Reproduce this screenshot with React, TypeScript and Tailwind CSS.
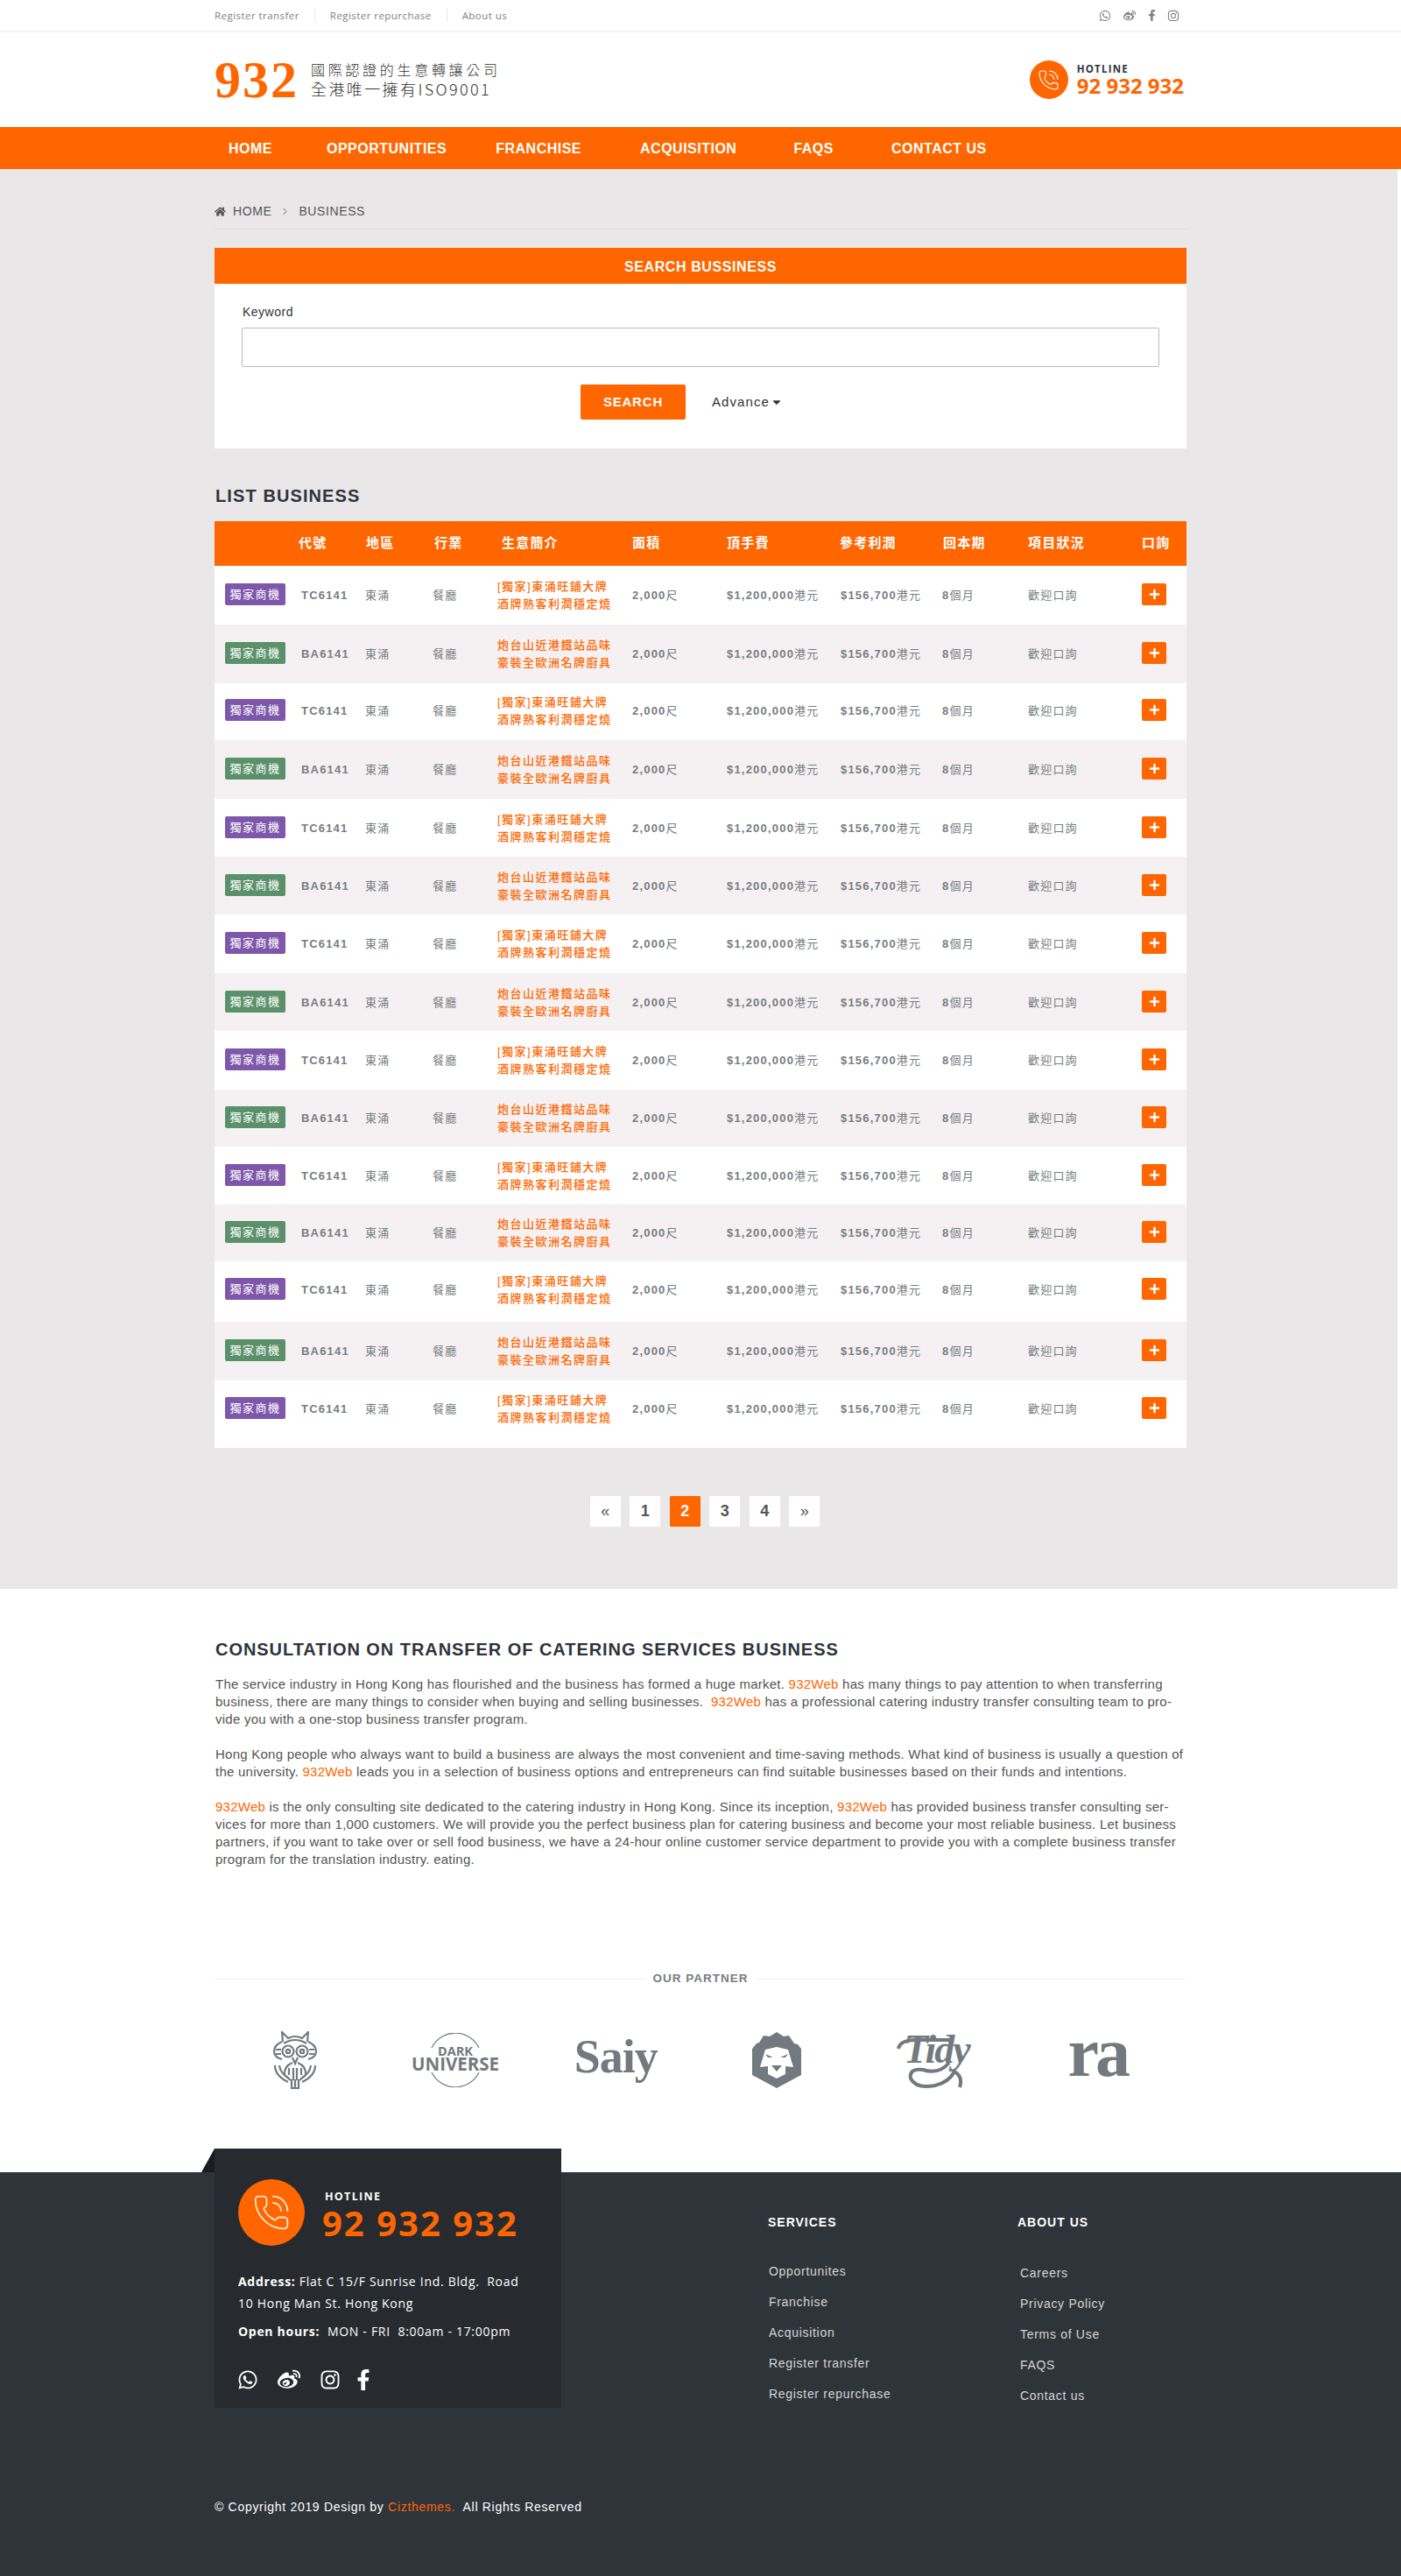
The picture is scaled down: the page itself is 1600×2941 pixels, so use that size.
import { FaWhatsapp, FaWeibo, FaFacebookF, FaInstagram, FaPlus, FaHome, FaCaretDown } from 'react-icons/fa'
import { PhoneCall, ChevronRight } from 'lucide-react'

const navItems = [
    { label: 'HOME', cls: 'ml-[16px]' },
    { label: 'OPPORTUNITIES', cls: 'ml-[62px]' },
    { label: 'FRANCHISE', cls: 'ml-[56px]' },
    { label: 'ACQUISITION', cls: 'ml-[67px]' },
    { label: 'FAQS', cls: 'ml-[65px]' },
    { label: 'CONTACT US', cls: 'ml-[66px]' },
]

const tableCols = 'grid grid-cols-[99px_73px_77px_74px_154px_108px_130px_116px_98px_130px_51px]'

const headers = [
    { label: '', cls: '' },
    { label: '代號', cls: '-ml-[3px]' },
    { label: '地區', cls: 'ml-[1px]' },
    { label: '行業', cls: 'ml-[2px]' },
    { label: '生意簡介', cls: 'ml-[5px]' },
    { label: '面積', cls: '' },
    { label: '頂手費', cls: '' },
    { label: '參考利潤', cls: '-ml-[1px]' },
    { label: '回本期', cls: 'ml-[1px]' },
    { label: '項目狀況', cls: '' },
    { label: '口詢', cls: '' },
]

const rowSizes = [
    'h-[67px] pt-[14px]', 'h-[67px] pt-[14px]', 'h-[65px] pt-[12px]', 'h-[67px] pt-[14px]', 'h-[66px] pt-[14px]',
    'h-[66px] pt-[14px]', 'h-[67px] pt-[14px]', 'h-[66px] pt-[14px]', 'h-[67px] pt-[14px]', 'h-[65px] pt-[13px]',
    'h-[66px] pt-[14px]', 'h-[65px] pt-[13px]', 'h-[69px] pt-[13px]', 'h-[67px] pt-[14px]', 'h-[77px] pt-[13px]',
]

const serviceLinks = ['Opportunites', 'Franchise', 'Acquisition', 'Register transfer', 'Register repurchase']
const aboutLinks = ['Careers', 'Privacy Policy', 'Terms of Use', 'FAQS', 'Contact us']

const Brand = () => <span className="text-[#ff6600]">932Web</span>

const OwlLogo = () => (
    <svg width="50" height="66" viewBox="0 0 50 66" fill="none" stroke="#737a7f" strokeWidth="2.2">
        <path d="M11 12 L10 1 L17 8 Q25 4 33 8 L40 1 L39 12" />
        <path d="M10 12 Q1 16 1 23 Q1 30 10 32 M40 12 Q49 16 49 23 Q49 30 40 32" />
        <path d="M12 14 Q25 6 38 14" />
        <circle cx="17" cy="23" r="6.5" />
        <circle cx="33" cy="23" r="6.5" />
        <circle cx="17" cy="23" r="2.2" />
        <circle cx="33" cy="23" r="2.2" />
        <path d="M3 21 H9 M3 26 H9 M41 21 H47 M41 26 H47" />
        <path d="M22 30 L25 37 L28 30" />
        <path d="M2 39 Q2 51 17 58 M48 39 Q48 51 33 58" />
        <path d="M7 39 Q8 48 18 54 M43 39 Q42 48 32 54" />
        <path d="M22 36 Q12 40 13 50 L20 56 M28 36 Q38 40 37 50 L30 56" />
        <path d="M18 42 V50 M23 42 V56 M27 42 V56 M32 42 V50" />
        <path d="M21 55 V65 H29 V55 M25 55 V65" />
    </svg>
)

const DarkUniverseLogo = () => (
    <svg width="98" height="62" viewBox="0 0 98 62" fill="none">
        <path d="M22 17 A30 30 0 0 1 76 17" stroke="#737a7f" strokeWidth="1.2" />
        <path d="M22 45 A30 30 0 0 0 76 45" stroke="#737a7f" strokeWidth="1.2" />
        <text x="49" y="26" textAnchor="middle" fontFamily="'Open Sans', sans-serif" fontWeight="700" fontSize="14.5" fill="#737a7f">DARK</text>
        <text x="49" y="43" textAnchor="middle" fontFamily="'Open Sans', sans-serif" fontWeight="700" fontSize="20.5" fill="#737a7f">UNIVERSE</text>
    </svg>
)

const LionLogo = () => (
    <svg width="56" height="64" viewBox="0 0 56 64">
        <path d="M28 0 L36 5 L42 4 L48 13 L52 14 L56 19 V49 L28 64 L0 49 V19 L5 13 L8 12 L13 4 L20 5 Z" fill="#737a7f" />
        <path d="M15 20 L28 17 L41 20 L47 40 L38 39 V48 L28 53 L18 48 V39 L9 40 Z" fill="#fff" />
        <path d="M15 25 L24 29 L18 29 Z M41 25 L32 29 L38 29 Z M22 38 H34 L28 45 Z" fill="#737a7f" />
    </svg>
)

// the swoosh is drawn, the word itself stays real text
const TidyLogo = () => (
    <div className="relative w-[92px] h-[66px]">
        <span className="absolute left-[8px] top-[-7px] font-['Liberation_Serif',serif] italic font-bold text-[46px] leading-[56px] tracking-[-2px] text-[#737a7f]">Tidy</span>
        <svg className="absolute left-0 top-0" width="92" height="66" viewBox="0 0 92 66" fill="none" stroke="#737a7f" strokeWidth="4">
            <path d="M2 20 Q4 10 22 10 L60 10" />
            <path d="M60 36 Q48 50 30 44 Q14 42 16 54 Q22 66 44 62 Q60 58 66 46 Q76 52 72 64" />
        </svg>
    </div>
)

const App = () => {
    return (
        <div className="w-[1600px] bg-white font-['Liberation_Sans','Noto_Sans_CJK_TC',sans-serif] text-[#555]">
            {/* top bar */}
            <div className="h-[37px] border-b-2 border-[#f5f5f5]">
                <div className="w-[1110px] mx-auto h-full flex items-center justify-between font-['Open_Sans',sans-serif] text-[11.5px] tracking-[0.45px] text-[#7d8185]">
                    <div className="flex items-center">
                        <span>Register transfer</span>
                        <span className="w-px h-[15px] bg-[#e8e8e8] mx-[17px]"></span>
                        <span>Register repurchase</span>
                        <span className="w-px h-[15px] bg-[#e8e8e8] mx-[17px]"></span>
                        <span>About us</span>
                    </div>
                    <div className="flex items-center pr-[8px] text-[14px]">
                        <FaWhatsapp />
                        <FaWeibo className="ml-[14px]" />
                        <FaFacebookF className="ml-[12px] text-[13px]" />
                        <FaInstagram className="ml-[11px]" />
                    </div>
                </div>
            </div>

            {/* header */}
            <div className="h-[108px] w-[1110px] mx-auto flex items-center justify-between">
                <div className="flex items-center">
                    <span className="font-['Liberation_Serif',serif] font-bold text-[60px] leading-none tracking-[2px] text-[#ff6600]">932</span>
                    <div className="ml-[14px] flex flex-col text-[#333] font-light font-['Noto_Sans_CJK_TC',sans-serif]">
                        <span className="text-[16px] leading-[21px] tracking-[3.7px]">國際認證的生意轉讓公司</span>
                        <span className="text-[18px] leading-[23px] tracking-[2.4px]">全港唯一擁有ISO9001</span>
                    </div>
                </div>
                <div className="flex items-center pr-[3px]">
                    <div className="w-[44px] h-[44px] rounded-full bg-[#ff6600] flex items-center justify-center">
                        <PhoneCall size={25} color="#fff" strokeWidth={1} />
                    </div>
                    <div className="ml-[10px] flex flex-col font-['Open_Sans',sans-serif]">
                        <span className="text-[11.5px] leading-[13px] font-bold tracking-[1.2px] text-[#2f343b]">HOTLINE</span>
                        <span className="text-[24px] leading-[25px] font-bold text-[#ff6600]">92 932 932</span>
                    </div>
                </div>
            </div>

            {/* nav */}
            <div className="h-12 pt-[1px] bg-[#ff6600] flex items-center pl-[245px] text-white font-bold text-[16px] tracking-[0.5px]">
                {navItems.map((n) => (
                    <span key={n.label} className={n.cls}>{n.label}</span>
                ))}
            </div>

            {/* main */}
            <div className="w-[1596px] bg-[#e9e7e8] pl-[245px] pt-[38px] pb-[71px]">
                <div className="w-[1110px]">
                    <div className="h-[31px] pb-[9px] border-b border-[#dddbdc] flex items-center text-[14px] tracking-[0.6px] text-[#555]">
                        <FaHome className="text-[13px] mr-[8px]" />
                        <span>HOME</span>
                        <ChevronRight size={13} strokeWidth={1.5} className="mx-[9px]" />
                        <span>BUSINESS</span>
                    </div>

                    <div className="mt-[21px] bg-white h-[229px]">
                        <div className="h-[41px] pt-[2px] bg-[#ff6600] flex items-center justify-center text-white font-bold text-[16px] tracking-[0.6px]">SEARCH BUSSINESS</div>
                        <div className="px-[31px]">
                            <div className="pt-[22px] pl-[1px] text-[14px] leading-[20px] tracking-[0.5px] text-[#333]">Keyword</div>
                            <input className="block mt-[8px] w-[1048px] h-[45px] bg-white border border-[#bbb] rounded-[2px] outline-none" />
                            <div className="mt-[20px] flex items-center justify-center">
                                <button className="ml-[-43px] w-[120px] h-[40px] rounded-[2px] bg-[#ff6600] text-white font-bold text-[15px] tracking-[0.8px]">SEARCH</button>
                                <span className="ml-[30px] flex items-center text-[15px] tracking-[1.1px] text-[#333]">
                                    Advance
                                    <FaCaretDown className="ml-[1px] text-[14px]" />
                                </span>
                            </div>
                        </div>
                    </div>

                    <h2 className="mt-[42px] mb-[17px] pl-[1px] text-[20px] leading-[24px] font-bold tracking-[1.1px] text-[#2f343b]">LIST BUSINESS</h2>

                    {/* table */}
                    <div className={`${tableCols} h-[51px] items-center bg-[#ff6600] text-white font-bold text-[15px] tracking-[1.2px]`}>
                        {headers.map((h, i) => (
                            <span key={i} className={h.cls}>{h.label}</span>
                        ))}
                    </div>
                    {rowSizes.map((size, i) => {
                        const even = i % 2 === 0
                        return (
                            <div key={i} className={`${tableCols} ${size} content-start items-center text-[13px] tracking-[1.2px] text-[#777e82] ${even ? 'bg-white' : 'bg-[#f5f1f2]'}`}>
                                <div className="pl-[12px]">
                                    <span className={`flex items-center justify-center w-[69px] h-[25px] mb-[3px] rounded-[2px] text-white tracking-[1.5px] ${even ? 'bg-[#7e57ab]' : 'bg-[#5a916b]'}`}>獨家商機</span>
                                </div>
                                <span className="font-bold">{even ? 'TC6141' : 'BA6141'}</span>
                                <span>東涌</span>
                                <span>餐廳</span>
                                <span className="h-[40px] leading-[20px] tracking-[1.5px] font-medium text-[#ff6600] whitespace-nowrap">
                                    {even ? <>[獨家]東涌旺鋪大牌<br />酒牌熟客利潤穩定燒</> : <>炮台山近港鐵站品味<br />豪裝全歐洲名牌廚具</>}
                                </span>
                                <span className="whitespace-nowrap"><b>2,000</b>尺</span>
                                <span className="whitespace-nowrap"><b>$1,200,000</b>港元</span>
                                <span className="whitespace-nowrap"><b>$156,700</b>港元</span>
                                <span className="whitespace-nowrap"><b>8</b>個月</span>
                                <span>歡迎口詢</span>
                                <span className="flex items-center justify-center w-[28px] h-[25px] mb-[3px] rounded-[2px] bg-[#ff6600] text-white">
                                    <FaPlus className="text-[13px]" />
                                </span>
                            </div>
                        )
                    })}

                    {/* pagination */}
                    <div className="mt-[55px] ml-[10px] flex justify-center gap-[10.5px] text-[18px] font-bold text-[#555]">
                        <span className="w-[35px] h-[35px] bg-white flex items-center justify-center font-normal">«</span>
                        <span className="w-[35px] h-[35px] bg-white flex items-center justify-center">1</span>
                        <span className="w-[35px] h-[35px] bg-[#ff6600] text-white rounded-[1px] flex items-center justify-center">2</span>
                        <span className="w-[35px] h-[35px] bg-white flex items-center justify-center">3</span>
                        <span className="w-[35px] h-[35px] bg-white flex items-center justify-center">4</span>
                        <span className="w-[35px] h-[35px] bg-white flex items-center justify-center font-normal">»</span>
                    </div>
                </div>
            </div>

            {/* consultation */}
            <div className="w-[1110px] mx-auto pt-[54px] pb-[95px]">
                <h2 className="pl-[1px] text-[20px] leading-[30px] font-bold tracking-[0.95px] text-[#2f343b]">CONSULTATION ON TRANSFER OF CATERING SERVICES BUSINESS</h2>
                <div className="mt-[15px] pl-[1px] text-[15px] leading-[20px] tracking-[0.245px] whitespace-nowrap text-[#555] flex flex-col gap-[20px]">
                    <p>The service industry in Hong Kong has flourished and the business has formed a huge market. <Brand /> has many things to pay attention to when transferring<br />business, there are many things to consider when buying and selling businesses.&nbsp; <Brand /> has a professional catering industry transfer consulting team to pro-<br />vide you with a one-stop business transfer program.</p>
                    <p>Hong Kong people who always want to build a business are always the most convenient and time-saving methods. What kind of business is usually a question of<br />the university. <Brand /> leads you in a selection of business options and entrepreneurs can find suitable businesses based on their funds and intentions.</p>
                    <p><Brand /> is the only consulting site dedicated to the catering industry in Hong Kong. Since its inception, <Brand /> has provided business transfer consulting ser-<br />vices for more than 1,000 customers. We will provide you the perfect business plan for catering business and become your most reliable business. Let business<br />partners, if you want to take over or sell food business, we have a 24-hour online customer service department to provide you with a complete business transfer<br />program for the translation industry. eating.</p>
                </div>

                <div className="mt-[116px] flex items-center gap-[9px]">
                    <div className="flex-1 h-px bg-[#eee]"></div>
                    <span className="text-[13.5px] leading-[20px] font-bold tracking-[1px] text-[#777e82]">OUR PARTNER</span>
                    <div className="flex-1 h-px bg-[#eee]"></div>
                </div>
                <div className="mt-[50px] pr-[10px] h-[66px] grid grid-cols-6 items-center justify-items-center">
                    <OwlLogo />
                    <DarkUniverseLogo />
                    <span className="mb-[8px] font-['Liberation_Serif',serif] font-bold text-[54px] leading-none tracking-[-1px] text-[#737a7f]">Saiy</span>
                    <LionLogo />
                    <TidyLogo />
                    <span className="-mt-[18px] font-['Liberation_Serif',serif] font-bold text-[80px] leading-none tracking-[-4px] text-[#737a7f]">ra</span>
                </div>
            </div>

            {/* footer */}
            <div className="bg-[#2f343b] h-[461px] pl-[245px] text-white">
                <div className="flex items-start">
                    <div className="relative -mt-[27px] w-[396px] h-[296px] bg-[#272b2f] pl-[27px] pt-[35px] font-['Open_Sans',sans-serif]">
                        <svg className="absolute -left-[15px] top-0" width="15" height="27" viewBox="0 0 15 27">
                            <path d="M15 0 V27 H0 Z" fill="#1a1d20" />
                        </svg>
                        <div className="flex items-start">
                            <div className="w-[76px] h-[76px] rounded-full bg-[#ff6600] flex items-center justify-center">
                                <PhoneCall size={44} color="#ffe4d2" strokeWidth={1} />
                            </div>
                            <div className="ml-[23px] pt-[12px] flex flex-col">
                                <span className="text-[12.5px] leading-[16px] font-bold tracking-[1.3px]">HOTLINE</span>
                                <span className="-ml-[3px] text-[40px] leading-[44px] font-bold tracking-[2px] text-[#ff6600]">92 932 932</span>
                            </div>
                        </div>
                        <p className="mt-[28px] text-[14px] leading-[25px] tracking-[0.7px] whitespace-nowrap">
                            <b>Address:</b> Flat C 15/F Sunrise Ind. Bldg.&nbsp; Road<br />10 Hong Man St. Hong Kong
                        </p>
                        <p className="mt-[7px] text-[14px] leading-[25px] tracking-[0.7px] whitespace-nowrap">
                            <b>Open hours:</b>&nbsp; MON - FRI&nbsp; 8:00am - 17:00pm
                        </p>
                        <div className="mt-[30px] -ml-[1px] flex items-center gap-[22px] text-[24px]">
                            <FaWhatsapp />
                            <FaWeibo className="text-[26px]" />
                            <FaInstagram />
                            <FaFacebookF className="-ml-[8px]" />
                        </div>
                    </div>

                    <div className="ml-[236px] pt-[47px] w-[285px]">
                        <h4 className="text-[14px] leading-[20px] font-bold tracking-[1px]">SERVICES</h4>
                        <div className="mt-[36px] pl-[1px] flex flex-col gap-[15px] text-[14px] leading-[20px] tracking-[0.7px] text-[#d5d5d5]">
                            {serviceLinks.map((l) => <span key={l}>{l}</span>)}
                        </div>
                    </div>

                    <div className="pt-[47px]">
                        <h4 className="text-[14px] leading-[20px] font-bold tracking-[1px]">ABOUT US</h4>
                        <div className="mt-[38px] pl-[3px] flex flex-col gap-[15px] text-[14px] leading-[20px] tracking-[0.7px] text-[#d5d5d5]">
                            {aboutLinks.map((l) => <span key={l}>{l}</span>)}
                        </div>
                    </div>
                </div>
                <p className="mt-[103px] text-[14px] leading-[20px] tracking-[0.7px]">
                    © Copyright 2019 Design by <span className="text-[#ff6600]">Cizthemes.</span>&nbsp; All Rights Reserved
                </p>
            </div>
        </div>
    )
}
export default App
